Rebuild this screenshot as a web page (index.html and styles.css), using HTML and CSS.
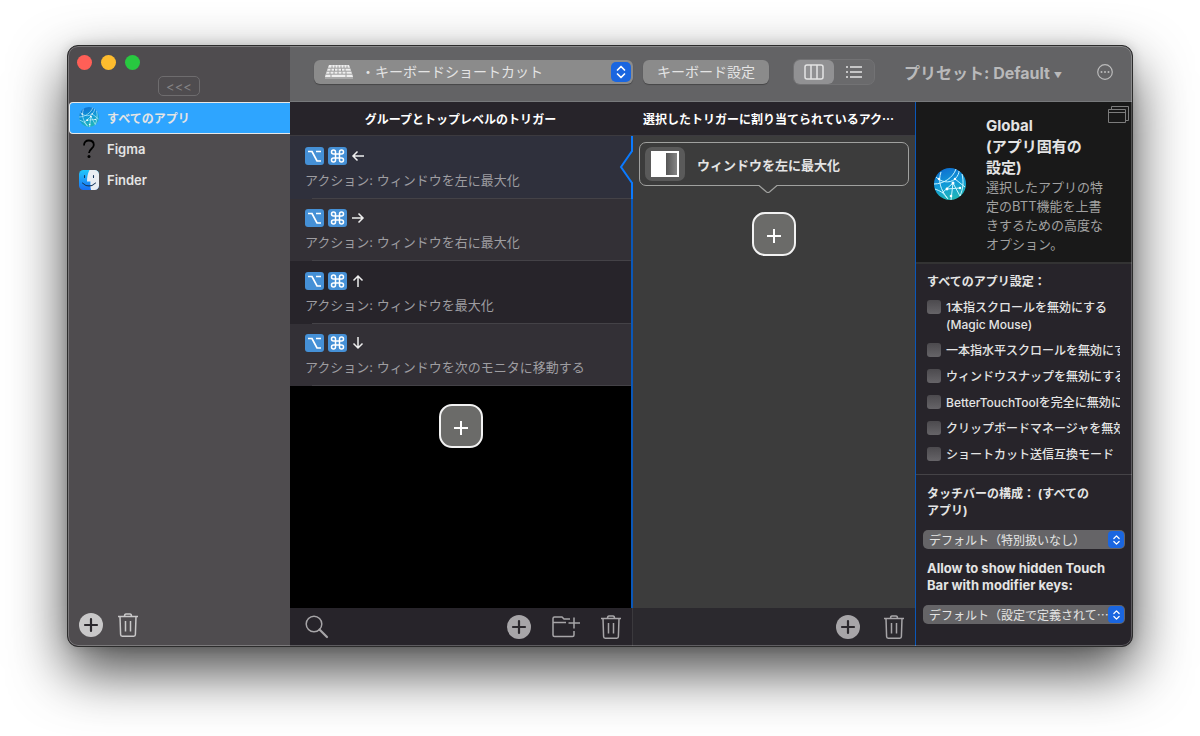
FILE: index.html
```html
<!DOCTYPE html>
<html lang="ja">
<head>
    <meta charset="UTF-8">
    <meta name="viewport" content="width=device-width, initial-scale=1.0">
    <title>BetterTouchTool</title>
    <link rel="stylesheet" href="styles.css">
</head>
<body>
    <svg class="sprite" aria-hidden="true">
        <defs>
            <linearGradient id="globe-fill" x1="0.3" y1="0" x2="0.6" y2="1">
                <stop offset="0" stop-color="#0f6fd0"/>
                <stop offset="0.5" stop-color="#109bd8"/>
                <stop offset="1" stop-color="#22b8b4"/>
            </linearGradient>
            <linearGradient id="finder-fill" x1="0" y1="0" x2="0" y2="1">
                <stop offset="0" stop-color="#1fc8fb"/>
                <stop offset="1" stop-color="#1a6ff2"/>
            </linearGradient>
            <linearGradient id="split-fill" x1="0" y1="0" x2="1" y2="0">
                <stop offset="0" stop-color="#555"/>
                <stop offset="1" stop-color="#858585"/>
            </linearGradient>
        </defs>
        <symbol id="globe" viewBox="0 0 32 32">
            <circle cx="16" cy="16" r="16" fill="url(#globe-fill)"/>
            <g fill="none" stroke="#c9f4ff" stroke-width="1">
                <path d="M2 9c5 5 13 7 19 2 3-3 4-6 4-8M0 16c9 0 19-6 22-15M7 4c-3 9-1 17 7 27M19 15L8 25M19 15l-2 17M19 15l7 13M13 21l13-1M21 11l10 8M1 21c5 2 8 3 12 9M28 6c2 8 1 15-2 22"/>
            </g>
            <g fill="#fff">
                <circle cx="5" cy="11" r="1.2"/>
                <circle cx="19" cy="15" r="1.5"/>
                <circle cx="21" cy="11" r="1.2"/>
                <circle cx="13" cy="21" r="1.4"/>
                <circle cx="26" cy="20" r="1.2"/>
                <circle cx="17" cy="28" r="1.3"/>
            </g>
        </symbol>
        <symbol id="question" viewBox="0 0 20 20">
            <path d="M5 6.500C5 3 7 1.500 9.800 1.500S14.800 3 14.800 6c0 3.500-4.800 4-4.800 8" fill="none" stroke="#000" stroke-width="1.800"/>
            <circle cx="10" cy="17.500" r="1.500"/>
        </symbol>
        <symbol id="finder" viewBox="0 0 20 20">
            <rect width="20" height="20" rx="4.500" fill="url(#finder-fill)"/>
            <path d="M10.500 0H15.500A4.500 4.500 0 0 1 20 4.500V15.500A4.500 4.500 0 0 1 15.500 20H12C11.300 17 11.300 14.500 11.400 11.500H8C8 7 8.800 3 10.500 0z" fill="#e9edf2"/>
            <path d="M5.500 5.500v2M14.500 5.500v2M3.500 13c3.500 3.800 9.500 3.800 13 0" fill="none" stroke="#17375e" stroke-width="1.100" stroke-linecap="round"/>
        </symbol>
        <symbol id="plus-circle" viewBox="0 0 24 24">
            <circle cx="12" cy="12" r="12" fill="currentColor"/>
            <path d="M12 6v12M6 12h12" stroke="#2b282d" stroke-width="2.200" stroke-linecap="round"/>
        </symbol>
        <symbol id="trash" viewBox="0 0 20 24">
            <path d="M0 3.500h20M6.500 3.500c0-2 .5-2.500 1.500-2.500h4c1 0 1.500.5 1.500 2.500M2 3.500l.6 18c0 1 .6 1.700 1.600 1.700h11.600c1 0 1.600-.7 1.600-1.700l.6-18M7.500 8v10.500M12.500 8v10.500" fill="none" stroke="currentColor" stroke-width="1.500"/>
        </symbol>
        <symbol id="search" viewBox="0 0 24 24">
            <circle cx="9" cy="9" r="7.800" fill="none" stroke="currentColor" stroke-width="1.500"/>
            <path d="M14.500 14.500l7.500 7.500" stroke="currentColor" stroke-width="2.200" stroke-linecap="round"/>
        </symbol>
        <symbol id="folder-plus" viewBox="0 0 28 24">
            <path d="M18 4H12L10 2H2.500C1.500 2 1 2.500 1 3.500V20c0 1 .5 1.500 1.500 1.500h18c1 0 1.500-.5 1.500-1.500V16M1 7.500h13M22 2.500v11M16.500 8H28" fill="none" stroke="currentColor" stroke-width="1.500"/>
        </symbol>
        <symbol id="option-key" viewBox="0 0 19 18">
            <rect width="19" height="18" rx="3" fill="#4590d6"/>
            <path d="M3 4.500h4l5 9.500h4M11 4.500h5" fill="none" stroke="#fff" stroke-width="1.700"/>
        </symbol>
        <symbol id="command-key" viewBox="0 0 19 18">
            <rect width="19" height="18" rx="3" fill="#4590d6"/>
            <path d="M7.500 7H5.500A2 2 0 1 1 7.500 5V13A2 2 0 1 1 5.500 11H13.500A2 2 0 1 1 11.500 13V5A2 2 0 1 1 13.500 7z" fill="none" stroke="#fff" stroke-width="1.500"/>
        </symbol>
        <symbol id="arrow" viewBox="0 0 14 14">
            <path d="M13 7H2M6.500 2.500L2 7l4.500 4.500" fill="none" stroke="#eee" stroke-width="1.500"/>
        </symbol>
        <symbol id="updown" viewBox="0 0 12 16">
            <path d="M2.500 6L6 2.500 9.500 6M2.500 10L6 13.500 9.500 10" fill="none" stroke="#fff" stroke-width="1.700" stroke-linecap="round" stroke-linejoin="round"/>
        </symbol>
        <symbol id="keyboard" viewBox="0 0 28 14">
            <path d="M4 0H24L28 11V14H0V11z" fill="#a9a9a9"/>
            <path d="M4 0H24L28 12H0z" fill="#eee"/>
            <path d="M3 3.200H25M2 6.200H26M1 9.200H27M7 0.500V3M10 0.500V3M13 0.500V3M16 0.500V3M19 0.500V3M22 0.500V3M6 3.500V6M9.500 3.500V6M13 3.500V6M16.500 3.500V6M20 3.500V6M5 6.500V9M9 6.500V9M13 6.500V9M17 6.500V9M21 6.500V9M6 9.500V12M21 9.500V12" stroke="#8a8a8a" stroke-width="0.800"/>
        </symbol>
    </svg>

    <div class="window">
        <aside class="sidebar">
            <div class="titlebar">
                <button class="light red" aria-label="閉じる"></button>
                <button class="light yellow" aria-label="しまう"></button>
                <button class="light green" aria-label="拡大"></button>
            </div>
            <button class="collapse-btn">&lt;&lt;&lt;</button>
            <nav class="app-list">
                <button class="app selected"><svg class="app-icon"><use href="#globe"/></svg>すべてのアプリ</button>
                <button class="app"><svg class="app-icon"><use href="#question"/></svg>Figma</button>
                <button class="app"><svg class="app-icon"><use href="#finder"/></svg>Finder</button>
            </nav>
            <div class="sidebar-footer">
                <button class="icon-btn" aria-label="アプリを追加"><svg width="24" height="24"><use href="#plus-circle"/></svg></button>
                <button class="icon-btn" aria-label="アプリを削除"><svg width="20" height="24"><use href="#trash"/></svg></button>
            </div>
        </aside>

        <div class="main">
            <header class="toolbar">
                <div class="select-wrap trigger-type">
                    <svg class="keyboard-icon"><use href="#keyboard"/></svg>
                    <select aria-label="トリガーの種類">
                        <option>・キーボードショートカット</option>
                    </select>
                    <span class="stepper"><svg width="12" height="16"><use href="#updown"/></svg></span>
                </div>
                <button class="toolbar-btn">キーボード設定</button>
                <div class="segmented">
                    <button class="segment active" aria-label="カラム表示">
                        <svg width="20" height="16" viewBox="0 0 20 16" fill="none" stroke="currentColor" stroke-width="1.500"><rect x="1" y="1" width="18" height="14" rx="2"/><path d="M7 1v14M13 1v14"/></svg>
                    </button>
                    <button class="segment" aria-label="リスト表示">
                        <svg width="16" height="12" viewBox="0 0 16 12" fill="none" stroke="currentColor" stroke-width="1.500"><path d="M0 1h2M4 1h12M0 6h2M4 6h12M0 11h2M4 11h12"/></svg>
                    </button>
                </div>
                <button class="preset-btn">プリセット: Default <span class="caret">▼</span></button>
                <button class="icon-btn more-btn" aria-label="その他">
                    <svg width="16" height="16" viewBox="0 0 16 16"><circle cx="8" cy="8" r="7.300" fill="none" stroke="currentColor" stroke-width="1.200"/><circle cx="4.500" cy="8" r="1" fill="currentColor"/><circle cx="8" cy="8" r="1" fill="currentColor"/><circle cx="11.500" cy="8" r="1" fill="currentColor"/></svg>
                </button>
            </header>

            <div class="panes">
                <section class="pane triggers">
                    <h2 class="pane-title">グループとトップレベルのトリガー</h2>
                    <div class="pane-body">
                        <div class="trigger-list">
                            <button class="trigger selected">
                                <span class="keys"><svg class="key"><use href="#option-key"/></svg><svg class="key"><use href="#command-key"/></svg><svg class="arrow"><use href="#arrow"/></svg></span>
                                <span class="action-name">アクション: ウィンドウを左に最大化</span>
                                <svg class="notch" viewBox="0 0 14 34"><path d="M14 1L2 17l12 16z" fill="#3c3c3c"/><path d="M13 0v1L2 17l11 16v1" fill="none" stroke="#0a7aff" stroke-width="2"/></svg>
                            </button>
                            <button class="trigger">
                                <span class="keys"><svg class="key"><use href="#option-key"/></svg><svg class="key"><use href="#command-key"/></svg><svg class="arrow right"><use href="#arrow"/></svg></span>
                                <span class="action-name">アクション: ウィンドウを右に最大化</span>
                            </button>
                            <button class="trigger">
                                <span class="keys"><svg class="key"><use href="#option-key"/></svg><svg class="key"><use href="#command-key"/></svg><svg class="arrow up"><use href="#arrow"/></svg></span>
                                <span class="action-name">アクション: ウィンドウを最大化</span>
                            </button>
                            <button class="trigger">
                                <span class="keys"><svg class="key"><use href="#option-key"/></svg><svg class="key"><use href="#command-key"/></svg><svg class="arrow down"><use href="#arrow"/></svg></span>
                                <span class="action-name">アクション: ウィンドウを次のモニタに移動する</span>
                            </button>
                        </div>
                        <button class="add-tile" aria-label="トリガーを追加"><svg width="14" height="14" viewBox="0 0 14 14"><path d="M7 0v14M0 7h14" stroke="#fff" stroke-width="2"/></svg></button>
                    </div>
                    <footer class="pane-footer">
                        <button class="icon-btn search-btn" aria-label="検索"><svg width="24" height="24"><use href="#search"/></svg></button>
                        <button class="icon-btn" aria-label="トリガーを追加"><svg width="24" height="24"><use href="#plus-circle"/></svg></button>
                        <button class="icon-btn" aria-label="グループを追加"><svg width="28" height="24"><use href="#folder-plus"/></svg></button>
                        <button class="icon-btn" aria-label="トリガーを削除"><svg width="20" height="24"><use href="#trash"/></svg></button>
                    </footer>
                </section>

                <section class="pane actions">
                    <h2 class="pane-title">選択したトリガーに割り当てられているアクション</h2>
                    <div class="pane-body">
                        <button class="action-card">
                            <span class="action-icon"><svg width="28" height="26" viewBox="0 0 28 26"><rect width="28" height="26" fill="#fff"/><rect x="15" y="2" width="11" height="22" fill="url(#split-fill)"/></svg></span>
                            ウィンドウを左に最大化
                            <svg class="card-tail" viewBox="0 0 20 9"><path d="M0 0h20v1l-8 6.500q-2 1-4 0L0 1z" fill="#3c3c3c"/><path d="M0 .5h1l7.500 6.500q1.500 1 3 0L19 .5h1" fill="none" stroke="#a0a19f" stroke-width="1.200"/></svg>
                        </button>
                        <button class="add-tile" aria-label="アクションを追加"><svg width="14" height="14" viewBox="0 0 14 14"><path d="M7 0v14M0 7h14" stroke="#fff" stroke-width="2"/></svg></button>
                    </div>
                    <footer class="pane-footer">
                        <button class="icon-btn" aria-label="アクションを追加"><svg width="24" height="24"><use href="#plus-circle"/></svg></button>
                        <button class="icon-btn" aria-label="アクションを削除"><svg width="20" height="24"><use href="#trash"/></svg></button>
                    </footer>
                </section>

                <section class="pane settings">
                    <div class="app-info">
                        <svg class="app-info-icon"><use href="#globe"/></svg>
                        <div>
                            <h3>Global<br>(アプリ固有の設定)</h3>
                            <p>選択したアプリの特定のBTT機能を上書きするための高度なオプション。</p>
                        </div>
                        <button class="icon-btn windows-btn" aria-label="ウィンドウ">
                            <svg width="21" height="18" viewBox="0 0 21 18" fill="none" stroke="currentColor"><path d="M3.500 3V.5h17v14H18"/><path d="M.5 3.500h17v13H.5zM.5 6.500h17" /></svg>
                        </button>
                    </div>
                    <div class="settings-group">
                        <h4>すべてのアプリ設定：</h4>
                        <label class="check"><input type="checkbox"><span>1本指スクロールを無効にする<br>(Magic Mouse)</span></label>
                        <label class="check"><input type="checkbox"><span>一本指水平スクロールを無効にする</span></label>
                        <label class="check"><input type="checkbox"><span>ウィンドウスナップを無効にする</span></label>
                        <label class="check"><input type="checkbox"><span>BetterTouchToolを完全に無効にする</span></label>
                        <label class="check"><input type="checkbox"><span>クリップボードマネージャを無効にする</span></label>
                        <label class="check"><input type="checkbox"><span>ショートカット送信互換モード</span></label>
                    </div>
                    <div class="touchbar-group">
                        <label for="touchbar">タッチバーの構成： (すべてのアプリ)</label>
                        <div class="select-wrap small">
                            <select id="touchbar"><option>デフォルト（特別扱いなし）</option></select>
                            <span class="stepper"><svg width="9" height="12"><use href="#updown"/></svg></span>
                        </div>
                        <label for="modifier">Allow to show hidden Touch Bar with modifier keys:</label>
                        <div class="select-wrap small">
                            <select id="modifier"><option>デフォルト（設定で定義されているもの）</option></select>
                            <span class="stepper"><svg width="9" height="12"><use href="#updown"/></svg></span>
                        </div>
                    </div>
                </section>
            </div>
        </div>
    </div>
</body>
</html>
```
FILE: styles.css
```css
* {
    box-sizing: border-box;
}
body {
    margin: 0;
    padding: 45px 67px 89px;
    min-height: 100vh;
    display: flex;
    background-color: #fff;
    color: #e4e4e4;
    font-family: Inter, "Noto Sans CJK JP", sans-serif;
    font-size: 13px;
    overflow: hidden;
}
button,
select {
    font: inherit;
    color: inherit;
    margin: 0;
    padding: 0;
    border: none;
    background: none;
    cursor: pointer;
}
h2, h3, h4, p {
    margin: 0;
}
svg {
    display: block;
    flex: none;
}
.sprite {
    position: absolute;
    width: 0;
    height: 0;
}
.window {
    position: relative;
    flex: 1;
    display: flex;
    border: 1px solid #2c2c2c;
    border-radius: 11px;
    overflow: hidden;
    background-color: #27242a;
    box-shadow: 0 24px 56px rgba(0, 0, 0, 0.72), 0 0 12px rgba(0, 0, 0, 0.15);
}
/* light inner rim over the content */
.window::after {
    content: "";
    position: absolute;
    inset: 0;
    border: 1px solid rgba(255, 255, 255, 0.25);
    border-radius: 10px;
    pointer-events: none;
}
.icon-btn {
    display: flex;
    color: #a7a5a8;
}

/* Sidebar */
.sidebar {
    width: 222px;
    display: flex;
    flex-direction: column;
    background-color: #4f4c4f;
}
.titlebar {
    display: flex;
    gap: 9px;
    padding: 9px 9px 0;
}
.light {
    width: 15px;
    height: 15px;
    border-radius: 50%;
}
.red {
    background-color: #ff5f57;
}
.yellow {
    background-color: #febc2e;
}
.green {
    background-color: #28c840;
}
.collapse-btn {
    align-self: center;
    width: 42px;
    height: 20px;
    margin-top: 6px;
    border: 1px solid #6e6c6e;
    border-radius: 5px;
    color: #858385;
    font-size: 13px;
    line-height: 20px;
}
.app-list {
    margin-top: 6px;
    display: flex;
    flex-direction: column;
}
.app {
    height: 31px;
    padding: 0 0 2px 11px;
    display: flex;
    align-items: center;
    gap: 8px;
    font-weight: 600;
    text-align: left;
}
.app.selected {
    height: 32px;
    margin-left: 1px;
    padding-left: 9px;
    border: 1px solid #e8e8e8;
    border-right: none;
    border-radius: 4px 0 0 4px;
    background-color: #2ea5ff;
    font-size: 12px;
}
.app-icon {
    width: 20px;
    height: 20px;
}
.sidebar-footer {
    margin-top: auto;
    padding: 0 11px 9px;
    display: flex;
    gap: 15px;
}
.sidebar-footer .icon-btn {
    color: #c9c8c9;
}

/* Toolbar */
.main {
    flex: 1;
    min-width: 0;
    display: flex;
    flex-direction: column;
}
.toolbar {
    height: 56px;
    padding: 0 19px 4px 24px;
    display: flex;
    align-items: center;
    background-color: #636365;
    border-bottom: 1px solid #77797b;
}
.select-wrap {
    position: relative;
}
.select-wrap select {
    appearance: none;
    width: 100%;
    display: block;
    font-family: "Noto Sans CJK JP", sans-serif;
    text-overflow: ellipsis;
}
.trigger-type {
    flex: 0 1 319px;
}
.trigger-type select {
    height: 24px;
    padding: 0 30px 2px 47px;
    border-radius: 6px;
    background-color: #8b8b8b;
    box-shadow: 0 1px 1px rgba(0, 0, 0, 0.3);
    font-size: 14px;
}
.keyboard-icon {
    position: absolute;
    left: 11px;
    top: 5px;
    width: 28px;
    height: 14px;
}
.stepper {
    position: absolute;
    right: 2px;
    top: 2px;
    width: 20px;
    height: 20px;
    display: flex;
    align-items: center;
    justify-content: center;
    border-radius: 5px;
    background-color: #1a66e0;
    pointer-events: none;
}
.toolbar-btn {
    height: 24px;
    margin-left: 10px;
    padding: 0 14px;
    border-radius: 6px;
    background-color: #8b8b8b;
    box-shadow: 0 1px 1px rgba(0, 0, 0, 0.3);
    font-size: 14px;
    line-height: 24px;
    white-space: nowrap;
}
.segmented {
    margin-left: 24px;
    display: flex;
    border: 1px solid #727274;
    border-radius: 7px;
    background-color: #6a6a6c;
}
.segment {
    width: 40px;
    height: 24px;
    display: flex;
    align-items: center;
    justify-content: center;
    border-radius: 6px;
}
.segment.active {
    background-color: #919193;
}
.preset-btn {
    margin-left: 29px;
    padding-top: 4px;
    color: #b9b9ba;
    font-size: 16px;
    font-weight: 700;
    line-height: 24px;
    white-space: nowrap;
}
.caret {
    font-size: 8px;
    vertical-align: middle;
}
.more-btn {
    margin-left: auto;
    color: #bbb;
}

/* Panes */
.panes {
    flex: 1;
    display: grid;
    grid-template-columns: minmax(0, 343fr) minmax(0, 283fr) 216px;
}
.pane {
    display: flex;
    flex-direction: column;
    min-width: 0;
}
.pane-title {
    height: 34px;
    padding: 0 12px 0 10px;
    border-bottom: 1px solid #3c3a3f;
    font-family: "Noto Sans CJK JP", sans-serif;
    font-size: 12px;
    font-weight: 700;
    line-height: 33px;
    text-align: center;
    white-space: nowrap;
    overflow: hidden;
    text-overflow: ellipsis;
    color: #fff;
}
.pane-body {
    flex: 1;
    display: flex;
    flex-direction: column;
    align-items: center;
}
.pane-footer {
    height: 38px;
    display: flex;
    align-items: center;
    justify-content: flex-end;
    gap: 21px;
    padding: 0 11px 0 15px;
}
.triggers .pane-body {
    background-color: #000;
    border-right: 2px solid #0a57b8;
}
.triggers .pane-footer {
    border-right: 1px solid #3b393d;
}
.search-btn {
    margin-right: auto;
}
.trigger-list {
    align-self: stretch;
    display: flex;
    flex-direction: column;
}
.trigger {
    position: relative;
    height: 62px;
    padding: 1px 15px 0;
    display: flex;
    flex-direction: column;
    justify-content: center;
    gap: 5px;
    background-color: #27242a;
    text-align: left;
}
.trigger:nth-child(odd) {
    height: 63px;
}
.trigger:nth-child(even) {
    background-color: #333036;
}
.trigger::after {
    content: "";
    position: absolute;
    left: 22px;
    right: 0;
    bottom: 0;
    height: 1px;
    background-color: #444247;
}
.trigger.selected {
    margin-right: -2px;
    background-color: #2f303c;
    border-right: 2px solid #0a7aff;
}
.keys {
    display: flex;
    align-items: center;
    gap: 4px;
}
.key {
    width: 19px;
    height: 18px;
}
.arrow {
    width: 14px;
    height: 14px;
}
.arrow.right {
    transform: rotate(180deg);
}
.arrow.up {
    transform: rotate(90deg);
}
.arrow.down {
    transform: rotate(-90deg);
}
.action-name {
    color: #9e9da1;
    font-size: 13px;
    line-height: 20px;
}
.notch {
    position: absolute;
    right: -2px;
    top: 14px;
    width: 14px;
    height: 34px;
}
.add-tile {
    width: 44px;
    height: 44px;
    padding-top: 4px;
    display: flex;
    align-items: center;
    justify-content: center;
    border: 2px solid #f2f2f2;
    border-radius: 13px;
    background-color: #6b6b69;
}
.triggers .add-tile {
    margin-top: 18px;
}
.actions {
    border-right: 1px solid #0a57b8;
}
.actions .pane-body {
    padding: 6px;
    background-color: #3c3c3c;
}
.actions .pane-footer {
    background-color: #2b292e;
    gap: 24px;
}
.action-card {
    position: relative;
    align-self: stretch;
    height: 44px;
    padding-left: 5px;
    display: flex;
    align-items: center;
    gap: 12px;
    border: 1px solid #a0a19f;
    border-radius: 7px;
    font-weight: 600;
}
.action-icon {
    width: 40px;
    height: 34px;
    display: flex;
    align-items: center;
    justify-content: center;
    border-radius: 7px;
    background-color: #5a5a5a;
}
.card-tail {
    position: absolute;
    left: 118px;
    top: 42px;
    width: 20px;
    height: 9px;
}
.actions .add-tile {
    margin-top: 26px;
}

/* Settings */
.app-info {
    position: relative;
    height: 162px;
    padding: 13px 24px 0 18px;
    display: flex;
    gap: 20px;
    background-color: #191919;
    border-bottom: 2px solid #333;
}
.app-info-icon {
    width: 32px;
    height: 32px;
    margin-top: 53px;
}
.app-info h3 {
    font-size: 15px;
    font-weight: 700;
    line-height: 21px;
    padding-right: 20px;
}
.app-info p {
    color: #a1a1a1;
    font-size: 13px;
    line-height: 19px;
}
.windows-btn {
    position: absolute;
    right: 3px;
    top: 4px;
    color: #7c7c7c;
}
.settings-group {
    padding: 9px 12px 11px 11px;
    display: flex;
    flex-direction: column;
    gap: 9px;
    border-bottom: 1px solid #454347;
}
.settings-group h4 {
    font-size: 12px;
    font-weight: 700;
    line-height: 17px;
}
.check {
    display: flex;
    gap: 5px;
    font-size: 12px;
    font-weight: 500;
    line-height: 17px;
    white-space: nowrap;
    overflow: hidden;
}
.check input {
    appearance: none;
    flex: none;
    width: 14px;
    height: 14px;
    margin: 1px 0 0;
    border-radius: 3px;
    background: linear-gradient(#4c4a4e, #666468);
}
.touchbar-group {
    padding: 10px 7px;
    display: flex;
    flex-direction: column;
    gap: 11px;
}
.touchbar-group label {
    padding: 0 4px;
    font-size: 13px;
    font-weight: 700;
    line-height: 17px;
}
.touchbar-group label:first-child {
    padding-right: 30px;
    font-size: 12px;
}
.small select {
    height: 19px;
    padding: 0 16px 0 6px;
    border-radius: 5px;
    background-color: #656467;
    font-size: 12px;
    line-height: 19px;
}
.small .stepper {
    right: 1px;
    top: 1px;
    width: 16px;
    height: 17px;
    border-radius: 4px;
}
```
